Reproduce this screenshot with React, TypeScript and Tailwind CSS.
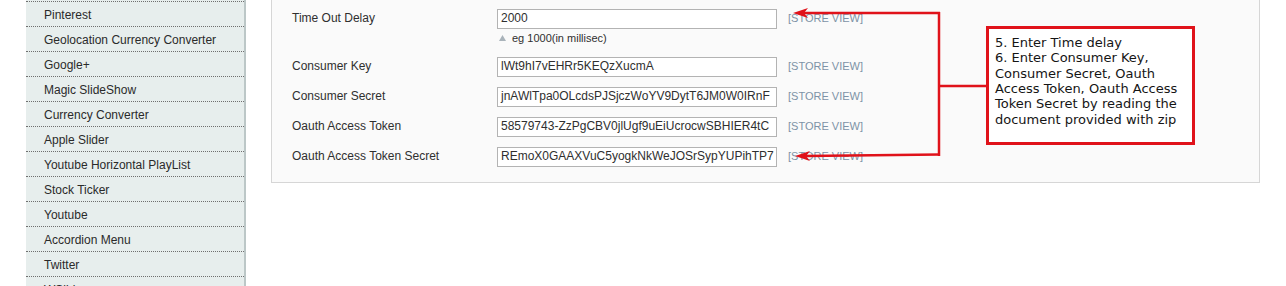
import React from "react";

const sideItems = [
  "Pinterest",
  "Geolocation Currency Converter",
  "Google+",
  "Magic SlideShow",
  "Currency Converter",
  "Apple Slider",
  "Youtube Horizontal PlayList",
  "Stock Ticker",
  "Youtube",
  "Accordion Menu",
  "Twitter",
  "WSlider",
];

const rows = [
  { label: "Consumer Key", value: "lWt9hI7vEHRr5KEQzXucmA" },
  { label: "Consumer Secret", value: "jnAWlTpa0OLcdsPJSjczWoYV9DytT6JM0W0IRnF" },
  { label: "Oauth Access Token", value: "58579743-ZzPgCBV0jlUgf9uEiUcrocwSBHIER4tC" },
  { label: "Oauth Access Token Secret", value: "REmoX0GAAXVuC5yogkNkWeJOSrSypYUPihTP7" },
];

function Field({ value }: { value: string }) {
  return (
    <div className="w-[280px] h-[20px] border border-[#b3b3b3] bg-white px-[3px] text-[12px] leading-[17px] text-[#2f2f2f] overflow-hidden whitespace-nowrap">
      {value}
    </div>
  );
}

function Scope() {
  return (
    <div className="ml-[11px] text-[11px] leading-[19px] text-[#7d92a6]">[STORE VIEW]</div>
  );
}

export default function App() {
  return (
    <div
      className="relative w-[1286px] h-[286px] overflow-hidden bg-white flex items-start"
      style={{ fontFamily: '"Liberation Sans", Arial, sans-serif' }}
    >
      {/* Sidebar */}
      <div className="ml-[26px] w-[220px] h-[286px] bg-[#e7eeed] border-r-2 border-[#bcc7c7] flex flex-col shrink-0">
        <div className="h-[2px] border-b border-dotted border-[#6f6f6f] shrink-0" />
        {sideItems.map((it) => (
          <div
            key={it}
            className="h-[25px] shrink-0 border-b border-dotted border-[#6f6f6f] flex items-center pt-[1px] pl-[18px] text-[12px] text-[#2a2a2a]"
          >
            {it}
          </div>
        ))}
      </div>

      {/* Main panel */}
      <div className="ml-[25px] w-[989px] h-[183px] bg-[#fafafa] border-l border-r border-b border-[#d6d6d6] shrink-0 pt-[9px] pl-[20px] flex flex-col">
        <div className="h-[48px] flex items-start shrink-0">
          <div className="w-[205px] text-[12px] leading-[18px] text-[#2f2f2f]">Time Out Delay</div>
          <div className="flex flex-col">
            <Field value="2000" />
            <div className="mt-[2px] h-[14px] flex items-center text-[11px] text-[#2f2f2f]">
              <svg width="7" height="6" viewBox="0 0 7 6" className="ml-[2px] mr-[6px]">
                <polygon points="3.5,0 7,6 0,6" fill="#a9b3ba" />
              </svg>
              eg 1000(in millisec)
            </div>
          </div>
          <Scope />
        </div>
        {rows.map((r) => (
          <div key={r.label} className="h-[30px] flex items-start shrink-0">
            <div className="w-[205px] text-[12px] leading-[18px] text-[#2f2f2f]">{r.label}</div>
            <Field value={r.value} />
            <Scope />
          </div>
        ))}
      </div>

      {/* Annotation arrows */}
      <svg
        className="absolute left-0 top-0 pointer-events-none"
        width="1286"
        height="286"
        viewBox="0 0 1286 286"
      >
        <g stroke="#e0121a" strokeWidth="2.5" fill="none">
          <line x1="940" y1="13" x2="803" y2="13" />
          <line x1="939" y1="12" x2="939" y2="156" />
          <line x1="940" y1="154.5" x2="805" y2="156" />
          <line x1="939" y1="86" x2="987" y2="86" />
        </g>
        <polygon points="793,13 808,8 804,13 808,18" fill="#e0121a" />
        <polygon points="795,156 810,151 806,156 810,161" fill="#e0121a" />
      </svg>

      {/* Annotation box */}
      <div
        className="absolute left-[986px] top-[26px] w-[209px] h-[119px] border-[3px] border-[#e0121a] bg-white pl-[6px] pt-[6px] text-[13px] leading-[15.33px] text-[#151515] whitespace-nowrap"
        style={{ fontFamily: '"DejaVu Sans", sans-serif' }}
      >
        5. Enter Time delay
        <br />
        6. Enter Consumer Key,
        <br />
        Consumer Secret, Oauth
        <br />
        Access Token, Oauth Access
        <br />
        Token Secret by reading the
        <br />
        document provided with zip
      </div>
    </div>
  );
}
